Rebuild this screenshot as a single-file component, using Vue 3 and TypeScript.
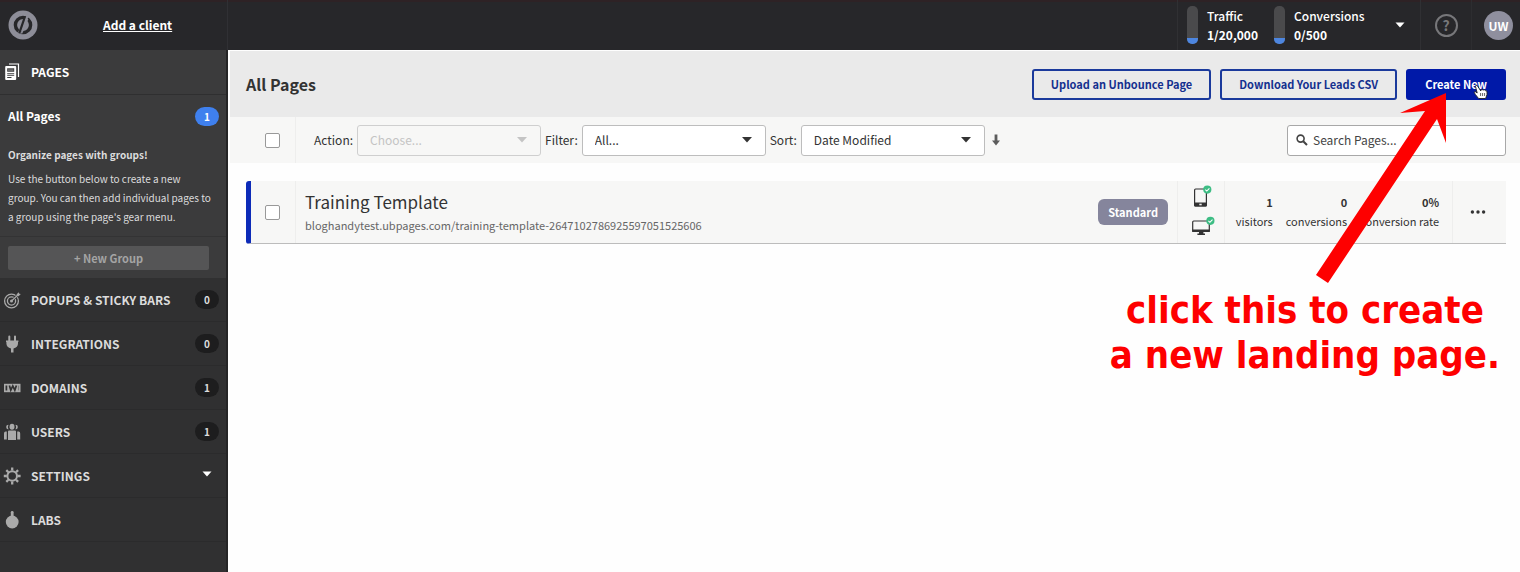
<script setup lang="ts">
import { ref } from 'vue'

interface NavItem {
  id: string
  label: string
  count?: number
  expandable?: boolean
}

interface Meter {
  label: string
  value: string
}

interface Stat {
  value: string
  label: string
}

const navItems: NavItem[] = [
  { id: 'popups', label: 'POPUPS & STICKY BARS', count: 0 },
  { id: 'integrations', label: 'INTEGRATIONS', count: 0 },
  { id: 'domains', label: 'DOMAINS', count: 1 },
  { id: 'users', label: 'USERS', count: 1 },
  { id: 'settings', label: 'SETTINGS', expandable: true },
  { id: 'labs', label: 'LABS' },
]

const meters: Meter[] = [
  { label: 'Traffic', value: '1/20,000' },
  { label: 'Conversions', value: '0/500' },
]

const stats: Stat[] = [
  { value: '1', label: 'visitors' },
  { value: '0', label: 'conversions' },
  { value: '0%', label: 'conversion rate' },
]

const action = ref('Choose...')
const filter = ref('All...')
const sort = ref('Date Modified')
const query = ref('')
const allSelected = ref(false)
const rowSelected = ref(false)
</script>

<template>
  <div class="app">
    <header class="topbar">
      <div class="brand">
        <svg class="logo" viewBox="0 0 30 30" aria-hidden="true">
          <circle cx="15" cy="15" r="14.5" fill="#8d8d98" />
          <circle cx="15" cy="15" r="7.6" fill="none" stroke="#27272a" stroke-width="3.4" />
          <path d="M18.9 3.5 L21.4 5 L11.3 26.5 L8.8 25 Z" fill="#8d8d98" />
          <path d="M16 6 L18.2 6.2 L12.3 23.8 L10.2 23 Z" fill="#27272a" />
          <path d="M18.6 8.2 L20.3 9.2 L14.3 23.6 L12.6 23.4 Z" fill="#8d8d98" />
        </svg>
        <a class="add-client" href="#">Add a client</a>
      </div>
      <div class="account">
        <div class="usage">
          <div v-for="m in meters" :key="m.label" class="meter">
            <span class="tube"><span class="tube-fill"></span></span>
            <span class="meter-text"><span>{{ m.label }}</span><b>{{ m.value }}</b></span>
          </div>
          <button class="usage-toggle" type="button" aria-label="Usage details">
            <svg class="caret" viewBox="0 0 10 6"><path d="M0.5 0.5 H9.5 L5 5.5 Z" fill="#fff" /></svg>
          </button>
        </div>
        <button class="help" type="button" aria-label="Help"><span class="help-ring">?</span></button>
        <button class="profile" type="button"><span class="avatar">UW</span></button>
      </div>
    </header>

    <div class="body">
      <nav class="sidebar">
        <a class="nav-row current" href="#">
          <svg class="nav-icon" viewBox="0 0 18 18">
            <path d="M5 1 H14.5 V14" fill="none" stroke="#fff" stroke-width="1.2" />
            <rect x="1.2" y="3" width="11" height="14" rx="1" fill="#fff" />
            <path d="M3.2 5.2 H10.2 V8.8 H3.2 Z M3.2 10.3 H10.2 V11.2 H3.2 Z M3.2 12.2 H10.2 V13.1 H3.2 Z M3.2 14.1 H7.5 V15 H3.2 Z" fill="#3b3b3c" />
            <path d="M4 6.2 H9.4 M4 7.6 H9.4" stroke="#8c8c8c" stroke-width=".7" />
          </svg>
          <span class="nav-label">PAGES</span>
        </a>
        <div class="groups">
          <a class="all-pages" href="#"><span>All Pages</span><span class="count active">1</span></a>
          <h3 class="hint-title">Organize pages with groups!</h3>
          <p class="hint">Use the button below to create a new group. You can then add individual pages to a group using the page's gear menu.</p>
        </div>
        <div class="new-group-wrap"><button class="new-group" type="button">+ New Group</button></div>

        <a v-for="item in navItems" :key="item.id" class="nav-row" href="#">
          <svg v-if="item.id === 'popups'" class="nav-icon" viewBox="0 0 18 18" fill="none" stroke="#aaa">
            <circle cx="7.5" cy="10" r="6.9" stroke-width="1.3" />
            <circle cx="7.5" cy="10" r="4.1" stroke-width="1.3" />
            <circle cx="7.5" cy="10" r="1.5" fill="#aaa" stroke="none" />
            <path d="M9 8.6 L14.2 3.6" stroke="#303031" stroke-width="2.4" />
            <path d="M7.5 10 L13.6 4.2" stroke-width="1.2" />
            <path d="M12.6 3.2 L14.9 1.2 L15.2 2.8 L16.8 3 L14.6 5.2 L12.9 5 Z" fill="#aaa" stroke="none" />
          </svg>
          <svg v-else-if="item.id === 'integrations'" class="nav-icon" viewBox="0 0 18 18" fill="#aaa">
            <path d="M4.3 1.4 a1 1 0 0 1 2 0 V5.5 H10 V1.4 a1 1 0 0 1 2 0 V5.5 H14.4 V7 H14 V8.5 C14 11 12.3 12.8 9.5 13.4 V17.5 H7 V13.4 C4.2 12.8 2.4 11 2.4 8.5 V7 H2 V5.5 H4.3 Z" />
          </svg>
          <svg v-else-if="item.id === 'domains'" class="nav-icon" viewBox="0 0 18 18">
            <rect x="0" y="4.8" width="16.5" height="8.4" fill="#aaa" />
            <path d="M2.4 6.6 V11.6 M5.4 6.4 L6.8 11.2 L8.8 7 L10.8 11.2 L12.4 6.4" fill="none" stroke="#303031" stroke-width="1.7" />
            <path d="M14.6 6.6 V11.4" stroke="#777" />
          </svg>
          <svg v-else-if="item.id === 'users'" class="nav-icon" viewBox="0 0 18 18" fill="#aaa">
            <path d="M4.5 1.7 A2.3 2.3 0 0 0 4.5 6.4 A4.8 4.8 0 0 1 4.5 1.7 Z M11.5 1.7 A2.3 2.3 0 0 1 11.5 6.4 A4.8 4.8 0 0 0 11.5 1.7 Z" />
            <ellipse cx="8" cy="3.7" rx="2.5" ry="3" />
            <path d="M4 8.6 Q4 7.6 5 7.6 H11 Q12 7.6 12 8.6 V17 H4 Z M1.6 8.6 H2.8 V16.6 H0 V10.6 Q0 8.8 1.6 8.6 Z M13.2 8.6 H14.6 Q16.2 8.8 16.2 10.6 V16.6 H13.2 Z" />
          </svg>
          <svg v-else-if="item.id === 'settings'" class="nav-icon" viewBox="0 0 18 18" fill="none" stroke="#aaa">
            <circle cx="8.2" cy="9" r="4.8" stroke-width="2" />
            <path d="M8.2 .6 V3.6 M8.2 14.4 V17.4 M-.2 9 H2.8 M13.6 9 H16.6 M2.3 3.1 L4.4 5.2 M12 12.8 L14.1 14.9 M14.1 3.1 L12 5.2 M4.4 12.8 L2.3 14.9" stroke-width="2.3" />
          </svg>
          <svg v-else class="nav-icon" viewBox="0 0 18 18" fill="#aaa">
            <circle cx="8.2" cy="11" r="6.4" />
            <path d="M6.8 1.2 a1.4 1.2 0 0 1 2.8 0 V6 H6.8 Z" />
          </svg>
          <span class="nav-label">{{ item.label }}</span>
          <span v-if="item.count !== undefined" class="count">{{ item.count }}</span>
          <svg v-if="item.expandable" class="caret nav-caret" viewBox="0 0 10 6"><path d="M0.5 0.5 H9.5 L5 5.5 Z" fill="#fff" /></svg>
        </a>
      </nav>

      <main class="content">
        <div class="page-head">
          <h1>All Pages</h1>
          <div class="head-actions">
            <button class="btn" type="button">Upload an Unbounce Page</button>
            <button class="btn" type="button">Download Your Leads CSV</button>
            <button class="btn primary" type="button">Create New</button>
          </div>
        </div>

        <div class="toolbar">
          <div class="tick-cell"><input v-model="allSelected" class="tick" type="checkbox" aria-label="Select all pages" /></div>
          <div class="filters">
            <label for="action">Action:</label>
            <span class="select-box disabled">
              <select id="action" v-model="action" disabled><option>Choose...</option></select>
              <svg class="caret" viewBox="0 0 10 6"><path d="M0 0 H10 L5 5.5 Z" fill="#c4c4c4" /></svg>
            </span>
            <label for="filter">Filter:</label>
            <span class="select-box">
              <select id="filter" v-model="filter"><option>All...</option></select>
              <svg class="caret" viewBox="0 0 10 6"><path d="M0 0 H10 L5 5.5 Z" fill="#333" /></svg>
            </span>
            <label for="sort">Sort:</label>
            <span class="select-box">
              <select id="sort" v-model="sort"><option>Date Modified</option></select>
              <svg class="caret" viewBox="0 0 10 6"><path d="M0 0 H10 L5 5.5 Z" fill="#333" /></svg>
            </span>
            <button class="sort-dir" type="button" aria-label="Sort descending">
              <svg viewBox="0 0 8 12"><path d="M2.6 0.5 H5.4 V6.5 H8 L4 11.5 L0 6.5 H2.6 Z" fill="#5c5c5c" /></svg>
            </button>
          </div>
          <label class="search">
            <svg viewBox="0 0 12 12" fill="none" stroke="#444"><circle cx="4.6" cy="4.6" r="3.5" stroke-width="1.6" /><path d="M7.2 7.2 L11 11" stroke-width="2" /></svg>
            <input v-model="query" type="search" placeholder="Search Pages..." aria-label="Search Pages" />
          </label>
        </div>

        <article class="page-row">
          <div class="row-tick"><input v-model="rowSelected" class="tick" type="checkbox" aria-label="Select Training Template" /></div>
          <div class="row-title">
            <h2>Training Template</h2>
            <a href="#">bloghandytest.ubpages.com/training-template-2647102786925597051525606</a>
          </div>
          <span class="plan">Standard</span>
          <div class="devices">
            <svg viewBox="0 0 24 24">
              <rect x="3.6" y="4" width="11.8" height="17" rx="1" fill="#f7f7f6" stroke="#333" stroke-width="1.2" />
              <rect x="3.2" y="17.6" width="12.6" height="4" rx="1" fill="#333" />
              <rect x="8.3" y="18.7" width="2.4" height="1.6" fill="#eee" />
              <circle cx="16.3" cy="4.6" r="4.1" fill="#3dbd84" />
              <path d="M14.3 4.7 L15.8 6.1 L18.4 3.4" fill="none" stroke="#fff" stroke-width="1.1" />
            </svg>
            <svg viewBox="0 0 24 24">
              <rect x="1.7" y="6" width="16.6" height="10.5" rx="1" fill="#f7f7f6" stroke="#333" stroke-width="1.2" />
              <path d="M1.2 14.4 H18.8 V17 H12.4 V18.6 H14 V20 H6.4 V18.6 H8 V17 H1.2 Z" fill="#333" />
              <circle cx="19.4" cy="5.8" r="4.1" fill="#3dbd84" />
              <path d="M17.4 5.9 L18.9 7.3 L21.5 4.6" fill="none" stroke="#fff" stroke-width="1.1" />
            </svg>
          </div>
          <div class="stats">
            <div v-for="s in stats" :key="s.label" class="stat"><b>{{ s.value }}</b><span>{{ s.label }}</span></div>
          </div>
          <button class="more" type="button" aria-label="More options">
            <svg viewBox="0 0 16 4" fill="#333"><circle cx="2.4" cy="2" r="1.7" /><circle cx="8" cy="2" r="1.7" /><circle cx="13.6" cy="2" r="1.7" /></svg>
          </button>
        </article>
      </main>
    </div>

    <div class="annotation">
      <svg viewBox="0 0 220 288" aria-hidden="true">
        <path d="M175.5 86.5 Q175.5 84.8 177 85.2 L180.8 91 V90.2 Q182 88.8 183.2 90 Q184.5 89.2 185.4 90.6 Q187 90.4 187 92 V94.6 L185.6 98.5 H178.6 L175.3 94.4 Q173.7 92.2 174.6 91.7 Q175.6 91.4 177.2 93 Z" fill="#fff" stroke="#222" stroke-width=".9" />
        <path d="M180.6 93 V96 M182.6 93 V96 M184.6 93 V96" stroke="#222" stroke-width=".7" />
        <polygon points="146,93 100,113 125,111 16,275 28,283 137,119 146,143" fill="#fe0000" />
      </svg>
      <p>click this to create<br />a new landing page.</p>
    </div>
  </div>
</template>

<style>
body {
  margin: 0;
  background: #fefefe;
}
</style>

<style scoped>
.app {
  position: relative;
  display: flex;
  flex-direction: column;
  min-height: 100vh;
  overflow: hidden;
  font-family: "Noto Sans CJK SC", "Noto Sans", sans-serif;
  font-size: 12px;
  line-height: 18px;
  color: #333;
}
* {
  box-sizing: border-box;
}
button, input, select {
  font: inherit;
  color: inherit;
  margin: 0;
  padding: 0;
  border: 0;
  background: none;
}
a {
  color: inherit;
  text-decoration: none;
}
h1, h2, h3, p {
  margin: 0;
}
.caret {
  width: 10px;
  height: 6px;
}

.topbar {
  display: flex;
  justify-content: space-between;
  height: 50px;
  background: #27272a;
  box-shadow: inset 0 2px #2e2225;
  color: #fff;
}
.brand {
  display: flex;
  align-items: center;
  width: 228px;
  padding-left: 8px;
  border-right: 1px solid #303034;
}
.logo {
  width: 30px;
  height: 30px;
}
.add-client {
  margin-left: 65px;
  font-weight: 700;
  text-decoration: underline;
}
.account {
  display: flex;
}
.usage {
  display: flex;
  align-items: center;
  width: 244px;
  padding: 0 15px 0 9px;
  border: 0 solid #303033;
  border-width: 0 1px;
}
.meter {
  display: flex;
  gap: 9px;
  width: 87px;
  flex-shrink: 0;
}
.tube {
  display: flex;
  align-items: flex-end;
  flex-shrink: 0;
  width: 11px;
  height: 38px;
  border-radius: 5px;
  background: #4a4a4c;
  overflow: hidden;
}
.tube-fill {
  width: 11px;
  height: 6px;
  background: #4d86e0;
}
.meter-text {
  display: flex;
  flex-direction: column;
  line-height: 19px;
  font-weight: 500;
}
.usage-toggle {
  display: flex;
  margin-left: auto;
}
.help {
  display: flex;
  align-items: center;
  justify-content: center;
  width: 51px;
  border-right: 1px solid #2d2d30;
}
.help-ring {
  width: 23px;
  height: 23px;
  border: 2px solid #77777a;
  border-radius: 50%;
  font-size: 14px;
  line-height: 19px;
  font-weight: 700;
  color: #77777a;
}
.profile {
  padding: 0 7px 0 12px;
}
.avatar {
  display: block;
  width: 29px;
  border-radius: 50%;
  background: #8f8f9e;
  font-weight: 700;
  line-height: 29px;
  text-align: center;
  color: #fff;
}

.body {
  display: flex;
  flex: 1;
}
.sidebar {
  width: 228px;
  flex-shrink: 0;
  background: #303031;
  border-right: 2px solid #252526;
  color: #dcdcdc;
}
.nav-row {
  display: flex;
  align-items: center;
  height: 44px;
  padding: 0 7px 0 4px;
  border-bottom: 1px solid #2b2b2c;
  font-weight: 700;
}
.nav-row.current {
  height: 45px;
  background: #3b3b3c;
  border-bottom: 1px solid #2f2f30;
  color: #fff;
}
.nav-icon {
  width: 18px;
  height: 18px;
  flex-shrink: 0;
  overflow: visible;
}
.nav-label {
  margin-left: 9px;
}
.count {
  width: 24px;
  margin-left: auto;
  border-radius: 10px;
  background: #1d1d1e;
  font-size: 10px;
  font-weight: 700;
  line-height: 19px;
  text-align: center;
}
.count.active {
  background: #3f80ee;
  color: #fff;
}
.nav-caret {
  margin: 0 7px 4px auto;
}
.groups {
  padding: 10px 7px 10px 8px;
  background: #3b3b3c;
  border-bottom: 1px solid #333334;
}
.all-pages {
  display: flex;
  align-items: center;
  height: 22px;
  font-weight: 700;
  color: #fff;
}
.hint-title {
  margin-top: 18px;
  font-size: 10px;
  line-height: 20px;
}
.hint {
  padding: 4px 8px 0 0;
  font-size: 10px;
  line-height: 19px;
}
.new-group-wrap {
  padding: 9px 17px 8px 8px;
  background: #3b3b3c;
}
.new-group {
  display: block;
  width: 100%;
  border-radius: 2px;
  background: #555556;
  line-height: 24px;
  font-size: 11px;
  font-weight: 700;
  color: #a4a4a4;
}

.content {
  flex: 1;
  min-width: 0;
  padding: 1px 0 0 2px;
}
.page-head {
  display: flex;
  align-items: center;
  justify-content: space-between;
  height: 66px;
  padding: 0 14px 0 16px;
  background: #eaeaea;
}
h1 {
  font-size: 16px;
  line-height: 24px;
  font-weight: 700;
}
.head-actions {
  display: flex;
  gap: 9px;
}
.btn {
  height: 31px;
  padding: 0 17px;
  border: 2px solid #1b3a9c;
  border-radius: 3px;
  font-size: 11px;
  font-weight: 700;
  color: #14308f;
}
.btn.primary {
  background: #0019a8;
  border-color: #0019a8;
  color: #fff;
}
.toolbar {
  display: flex;
  align-items: center;
  height: 46px;
  padding-right: 14px;
  background: #f7f7f6;
}
.tick-cell {
  display: flex;
  align-items: center;
  align-self: stretch;
  width: 66px;
  padding-left: 35px;
  border-right: 1px solid #eeeeed;
}
.tick {
  appearance: none;
  width: 15px;
  height: 15px;
  border: 1px solid #999;
  border-radius: 2px;
  background: #fff;
}
.filters {
  display: flex;
  align-items: center;
  gap: 4px;
  padding-left: 18px;
}
.select-box {
  display: flex;
  align-items: center;
  width: 184px;
  height: 31px;
  padding-right: 13px;
  border: 1px solid #bdbdbd;
  border-radius: 3px;
  background: #fff;
}
.select-box.disabled {
  background: #f7f7f6;
  border-color: #cfcfcf;
}
.select-box select {
  flex: 1;
  height: 29px;
  padding-left: 12px;
  appearance: none;
  outline: 0;
}
.select-box select:disabled {
  color: #c4c4c4;
  opacity: 1;
}
.sort-dir {
  display: flex;
  margin-left: 3px;
}
.sort-dir svg {
  width: 8px;
  height: 12px;
}
.search {
  display: flex;
  align-items: center;
  gap: 5px;
  width: 219px;
  height: 31px;
  margin-left: auto;
  padding: 0 8px;
  border: 1px solid #a8a8a8;
  border-radius: 3px;
  background: #fff;
}
.search svg {
  width: 12px;
  height: 12px;
}
.search input {
  flex: 1;
  min-width: 0;
  outline: 0;
}
.search input::placeholder {
  color: #444;
  opacity: 1;
}

.page-row {
  display: flex;
  align-items: center;
  height: 63px;
  margin: 18px 14px 0 16px;
  background: #f7f7f6;
  border-left: 5px solid #0d2bb8;
  border-bottom: 1px solid #bcbcbc;
  border-radius: 3px 0 0 3px;
}
.row-tick {
  display: flex;
  align-items: center;
  align-self: stretch;
  width: 45px;
  padding-left: 14px;
  border-right: 1px solid #eeeeed;
}
.row-title {
  display: flex;
  flex-direction: column;
  padding-left: 9px;
}
.row-title h2 {
  font-size: 17px;
  line-height: 26px;
  font-weight: 400;
}
.row-title a {
  font-size: 11px;
  line-height: 20px;
  color: #666;
}
.plan {
  margin-left: auto;
  padding: 0 10px;
  border-radius: 6px;
  background: #85859c;
  font-size: 11px;
  font-weight: 700;
  line-height: 26px;
  color: #fff;
}
.devices {
  display: flex;
  flex-direction: column;
  gap: 6px;
  align-self: stretch;
  width: 48px;
  margin-left: 9px;
  padding: 4px 0 0 13px;
  border: 0 solid #eeeeed;
  border-width: 0 1px;
}
.devices svg {
  width: 24px;
  height: 24px;
}
.stats {
  display: flex;
  justify-content: flex-end;
  align-items: center;
  gap: 13px;
  align-self: stretch;
  width: 228px;
  padding-right: 13px;
  border-right: 1px solid #eeeeed;
}
.stat {
  display: flex;
  flex-direction: column;
  align-items: flex-end;
  font-size: 11px;
  line-height: 19px;
}
.more {
  display: flex;
  justify-content: center;
  width: 53px;
  padding-right: 4px;
}
.more svg {
  width: 16px;
  height: 4px;
}

.annotation {
  position: absolute;
  top: 0;
  right: 0;
  pointer-events: none;
}
.annotation svg {
  display: block;
  width: 220px;
  height: 288px;
  margin-left: auto;
}
.annotation p {
  padding-right: 20px;
  font-family: "DejaVu Sans Condensed", "DejaVu Sans", sans-serif;
  font-size: 38px;
  font-weight: 700;
  line-height: 45px;
  text-align: center;
  color: #fe0000;
}
</style>
